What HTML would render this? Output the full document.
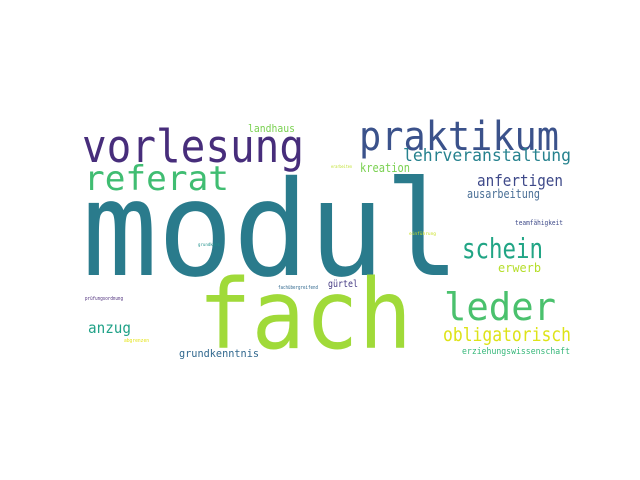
<!DOCTYPE html>
<html><head><meta charset="utf-8"><style>
html,body{margin:0;padding:0;background:#fff;width:640px;height:480px;overflow:hidden}
svg{display:block}
text{font-family:"DejaVu Sans Mono","Liberation Mono",monospace}
</style></head><body>
<svg width="640" height="480" viewBox="0 0 640 480" xmlns="http://www.w3.org/2000/svg">
<text x="82" y="275" font-size="132" fill="#2a7b8c" textLength="378" lengthAdjust="spacingAndGlyphs">modul</text>
<text x="198" y="348" font-size="96" fill="#a0da39" textLength="214" lengthAdjust="spacingAndGlyphs">fach</text>
<text x="82" y="162" font-size="45" fill="#472d7b" textLength="222" lengthAdjust="spacingAndGlyphs">vorlesung</text>
<text x="359" y="150" font-size="40" fill="#3b528b" textLength="200" lengthAdjust="spacingAndGlyphs">praktikum</text>
<text x="84" y="190" font-size="34" fill="#40bd72" textLength="145" lengthAdjust="spacingAndGlyphs">referat</text>
<text x="403" y="161" font-size="17" fill="#26828e" textLength="168" lengthAdjust="spacingAndGlyphs">lehrveranstaltung</text>
<text x="360" y="172" font-size="12" fill="#7ad151" textLength="50" lengthAdjust="spacingAndGlyphs">kreation</text>
<text x="248" y="132" font-size="11" fill="#7ad151" textLength="47" lengthAdjust="spacingAndGlyphs">landhaus</text>
<text x="477" y="186" font-size="16" fill="#3e4989" textLength="86" lengthAdjust="spacingAndGlyphs">anfertigen</text>
<text x="467" y="198" font-size="12" fill="#4a6f96" textLength="73" lengthAdjust="spacingAndGlyphs">ausarbeitung</text>
<text x="515" y="225" font-size="7" fill="#3e4a89" textLength="48" lengthAdjust="spacingAndGlyphs">teamfähigkeit</text>
<text x="462" y="258" font-size="28" fill="#21a585" textLength="81" lengthAdjust="spacingAndGlyphs">schein</text>
<text x="498" y="272" font-size="12" fill="#b5de2b" textLength="43" lengthAdjust="spacingAndGlyphs">erwerb</text>
<text x="444" y="320" font-size="38" fill="#4ac16d" textLength="112" lengthAdjust="spacingAndGlyphs">leder</text>
<text x="443" y="341" font-size="19" fill="#dde318" textLength="128" lengthAdjust="spacingAndGlyphs">obligatorisch</text>
<text x="462" y="354" font-size="9" fill="#35b779" textLength="108" lengthAdjust="spacingAndGlyphs">erziehungswissenschaft</text>
<text x="328" y="287" font-size="10" fill="#443983" textLength="30" lengthAdjust="spacingAndGlyphs">gürtel</text>
<text x="179" y="357" font-size="11" fill="#31688e" textLength="80" lengthAdjust="spacingAndGlyphs">grundkenntnis</text>
<text x="88" y="333" font-size="15" fill="#1fa187" textLength="43" lengthAdjust="spacingAndGlyphs">anzug</text>
<text x="198" y="246" font-size="4.5" fill="#21918c" textLength="22" lengthAdjust="spacingAndGlyphs">grundkurs</text>
<text x="278" y="289" font-size="5" fill="#31688e" textLength="40" lengthAdjust="spacingAndGlyphs">fachübergreifend</text>
<text x="85" y="300" font-size="5" fill="#482878" textLength="38" lengthAdjust="spacingAndGlyphs">prüfungsordnung</text>
<text x="124" y="342" font-size="5" fill="#e5e419" textLength="25" lengthAdjust="spacingAndGlyphs">abgrenzen</text>
<text x="331" y="168" font-size="4" fill="#bddf26" textLength="21" lengthAdjust="spacingAndGlyphs">erarbeiten</text>
<text x="409" y="235" font-size="4.5" fill="#c8e020" textLength="27" lengthAdjust="spacingAndGlyphs">einführung</text>
</svg>
</body></html>
